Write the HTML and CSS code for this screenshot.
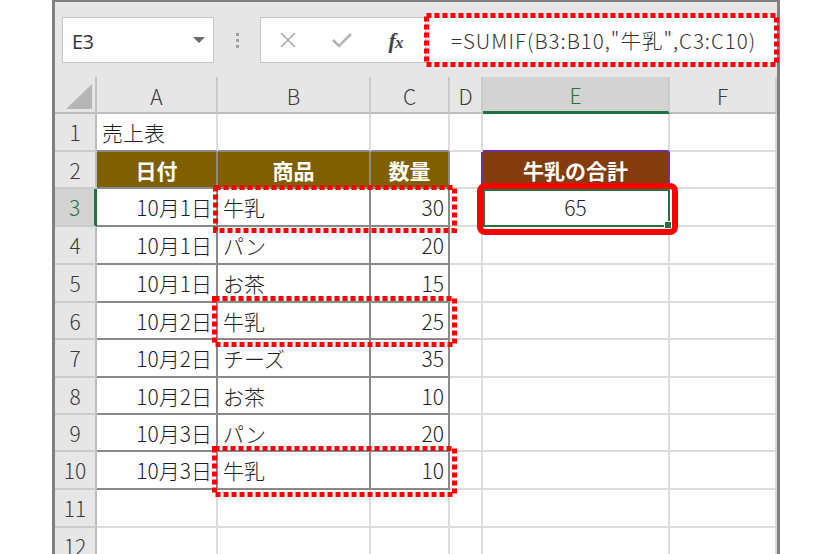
FILE: index.html
```html
<!DOCTYPE html>
<html lang="ja">
<head>
<meta charset="utf-8">
<title>SUMIF</title>
<link rel="stylesheet" href="styles.css">
</head>
<body>
<div class="window">
  <div class="fbar">
    <div class="namebox">
      <span class="nb-text">E3</span>
      <svg class="nb-arrow" width="12" height="6" viewBox="0 0 12 6"><path d="M0 0H12L6 6Z" fill="#6b6b6b"/></svg>
    </div>
    <div class="grip"><i></i><i></i><i></i></div>
    <div class="btns">
      <span class="btn">
        <svg width="18" height="16" viewBox="0 0 18 16"><path d="M2 1L16 15M16 1L2 15" stroke="#a8a8a8" stroke-width="1.6" fill="none"/></svg>
      </span>
      <span class="btn">
        <svg width="22" height="16" viewBox="0 0 22 16"><path d="M2 8L8 14L20 2" stroke="#b4b4b4" stroke-width="2.6" fill="none"/></svg>
      </span>
      <span class="btn fx"><span class="fx-f">f</span><span class="fx-x">x</span></span>
    </div>
    <div class="formula">=SUMIF(B3:B10,"牛乳",C3:C10)</div>
  </div>

  <div class="sheet">
    <div class="corner"><svg width="26" height="25" viewBox="0 0 26 25"><path d="M0 25H26V0Z" fill="#b6b6b6"/></svg></div>
    <div class="ch">A</div>
    <div class="ch">B</div>
    <div class="ch">C</div>
    <div class="ch">D</div>
    <div class="ch ch-sel">E</div>
    <div class="ch">F</div>

    <div class="rh">1</div>
    <div class="c l top-dark">売上表</div>
    <div class="c top-dark"></div>
    <div class="c top-dark"></div>
    <div class="c"></div>
    <div class="c purple-b"></div>
    <div class="c"></div>

    <div class="rh">2</div>
    <div class="c t head">日付</div>
    <div class="c t head">商品</div>
    <div class="c t head">数量</div>
    <div class="c purple-r"></div>
    <div class="c head2">牛乳の合計</div>
    <div class="c"></div>

    <div class="rh rh-sel">3</div>
    <div class="c t r">10月1日</div>
    <div class="c t l">牛乳</div>
    <div class="c t r">30</div>
    <div class="c"></div>
    <div class="c sel">65</div>
    <div class="c"></div>

    <div class="rh">4</div>
    <div class="c t r">10月1日</div>
    <div class="c t l">パン</div>
    <div class="c t r">20</div>
    <div class="c"></div>
    <div class="c"></div>
    <div class="c"></div>

    <div class="rh">5</div>
    <div class="c t r">10月1日</div>
    <div class="c t l">お茶</div>
    <div class="c t r">15</div>
    <div class="c"></div>
    <div class="c"></div>
    <div class="c"></div>

    <div class="rh">6</div>
    <div class="c t r">10月2日</div>
    <div class="c t l">牛乳</div>
    <div class="c t r">25</div>
    <div class="c"></div>
    <div class="c"></div>
    <div class="c"></div>

    <div class="rh">7</div>
    <div class="c t r">10月2日</div>
    <div class="c t l">チーズ</div>
    <div class="c t r">35</div>
    <div class="c"></div>
    <div class="c"></div>
    <div class="c"></div>

    <div class="rh">8</div>
    <div class="c t r">10月2日</div>
    <div class="c t l">お茶</div>
    <div class="c t r">10</div>
    <div class="c"></div>
    <div class="c"></div>
    <div class="c"></div>

    <div class="rh">9</div>
    <div class="c t r">10月3日</div>
    <div class="c t l">パン</div>
    <div class="c t r">20</div>
    <div class="c"></div>
    <div class="c"></div>
    <div class="c"></div>

    <div class="rh">10</div>
    <div class="c t r">10月3日</div>
    <div class="c t l">牛乳</div>
    <div class="c t r">10</div>
    <div class="c"></div>
    <div class="c"></div>
    <div class="c"></div>

    <div class="rh">11</div>
    <div class="c"></div>
    <div class="c"></div>
    <div class="c"></div>
    <div class="c"></div>
    <div class="c"></div>
    <div class="c"></div>

    <div class="rh">12</div>
    <div class="c"></div>
    <div class="c"></div>
    <div class="c"></div>
    <div class="c"></div>
    <div class="c"></div>
    <div class="c"></div>
  </div>
</div>

<svg class="marks" width="831" height="554" viewBox="0 0 831 554">
  <g fill="none" stroke="#ff0000" stroke-width="5" stroke-dasharray="5 3">
    <rect x="426.5" y="15.5" width="350" height="49"/>
    <rect x="215.5" y="187.5" width="239" height="43"/>
    <rect x="214.5" y="298.5" width="240" height="46"/>
    <rect x="214.5" y="448.5" width="240" height="46"/>
  </g>
  <rect x="480" y="186" width="195" height="46" rx="5" fill="none" stroke="#ff0000" stroke-width="6"/>
</svg>
</body>
</html>
```

FILE: styles.css
```css
html, body {
  margin: 0;
  padding: 0;
  width: 831px;
  height: 554px;
  overflow: hidden;
  background: #ffffff;
}

body {
  position: relative;
  font-family: "Noto Sans CJK JP", "Noto Sans", sans-serif;
  color: #222222;
}

.window {
  box-sizing: border-box;
  margin-left: 52px;
  width: 728px;
  height: 600px;
  border-left: 3px solid #808080;
  border-right: 3px solid #808080;
  border-top: 2px solid #808080;
  background: #e6e6e6;
}

/* formula bar */
.fbar {
  display: flex;
  align-items: flex-start;
  height: 75px;
  padding: 15px 0 0 7px;
  box-sizing: border-box;
}

.namebox {
  box-sizing: border-box;
  width: 152px;
  height: 46px;
  background: #ffffff;
  border: 1px solid #c6c6c6;
  display: flex;
  align-items: center;
  padding: 2px 8px 0 9px;
}

.nb-text {
  flex: 1;
  font-family: "Open Sans", "Noto Sans", sans-serif;
  font-size: 20px;
  color: #333333;
  letter-spacing: -0.5px;
}

.nb-arrow {
  margin-top: -2px;
}

.grip {
  width: 46px;
  height: 46px;
  display: flex;
  flex-direction: column;
  align-items: center;
  justify-content: center;
  gap: 3px;
}

.grip i {
  display: block;
  width: 3px;
  height: 3px;
  background: #a0a0a0;
}

.btns {
  box-sizing: border-box;
  width: 166px;
  height: 46px;
  background: #ffffff;
  border: 1px solid #c6c6c6;
  display: flex;
  align-items: center;
  padding-left: 12px;
  gap: 24px;
}

.btn {
  width: 30px;
  display: flex;
  justify-content: center;
  align-items: center;
}

.fx {
  font-family: "Liberation Serif", serif;
  font-style: italic;
  font-weight: bold;
  color: #444444;
  align-items: baseline;
  padding-top: 2px;
}

.fx-f {
  font-size: 22px;
}

.fx-x {
  font-size: 17px;
  margin-left: -1px;
}

.formula {
  flex: 1;
  margin-left: 4px;
  height: 45px;
  background: #ffffff;
  display: flex;
  align-items: center;
  padding-left: 21px;
  font-size: 20.5px;
  font-weight: 300;
  letter-spacing: 1px;
  color: #333333;
  white-space: nowrap;
  overflow: hidden;
}

/* sheet */
.sheet {
  display: grid;
  grid-template-columns: 42px 121px 153px 79px 33px 187px 107px;
  grid-template-rows: 37px 38px 37px 38px 38px 38px 37px 38px 37px 37px 38px 38px 38px;
  background: #ffffff;
  font-size: 21px;
}

.corner {
  background: #e6e6e6;
  border-right: 2px solid #c4c4c4;
  border-bottom: 2px solid #bdbdbd;
  box-sizing: border-box;
  display: flex;
  align-items: flex-end;
  justify-content: flex-end;
  padding: 0 3px 3px 0;
}

.ch {
  box-sizing: border-box;
  background: #e6e6e6;
  border-right: 2px solid #cbcbcb;
  border-bottom: 2px solid #bdbdbd;
  display: flex;
  align-items: center;
  justify-content: center;
  color: #3a3a3a;
  font-weight: 300;
  padding-top: 2px;
}

.ch-sel {
  background: #d3d3d3;
  border-bottom: 3px solid #217346;
  color: #217346;
}

.rh {
  box-sizing: border-box;
  background: #e6e6e6;
  border-right: 2px solid #bdbdbd;
  border-bottom: 2px solid #cbcbcb;
  display: flex;
  align-items: center;
  justify-content: center;
  color: #3a3a3a;
  font-weight: 300;
}

.rh-sel {
  background: #d3d3d3;
  border-right: 3px solid #217346;
  color: #217346;
}

.c {
  box-sizing: border-box;
  border-right: 2px solid #dcdcdc;
  border-bottom: 2px solid #dcdcdc;
  display: flex;
  align-items: center;
  white-space: nowrap;
  color: #1e1e1e;
  font-weight: 300;
}

.l {
  justify-content: flex-start;
  padding-left: 5px;
}

.r {
  justify-content: flex-end;
  padding-right: 4px;
}

.t {
  border-right-color: #8a8a8a;
  border-bottom-color: #8a8a8a;
}

.top-dark {
  border-bottom-color: #8a8a8a;
}

.head {
  background: #7f6000;
  color: #ffffff;
  font-weight: bold;
  justify-content: center;
}

.head2 {
  background: #843c0c;
  color: #ffffff;
  font-weight: bold;
  justify-content: center;
  border-right-color: #7030a0;
}

.purple-r {
  border-right-color: #7030a0;
}

.purple-b {
  border-bottom-color: #7030a0;
}

.sel {
  position: relative;
  justify-content: center;
  border-right: 2px solid #217346;
  border-bottom: 2px solid #217346;
  box-shadow: inset 2px 2px 0 #217346;
}

.sel::after {
  content: "";
  position: absolute;
  right: -4px;
  bottom: -4px;
  width: 6px;
  height: 6px;
  background: #217346;
  border: 1px solid #ffffff;
}

.marks {
  position: absolute;
  left: 0;
  top: 0;
  pointer-events: none;
}
```
